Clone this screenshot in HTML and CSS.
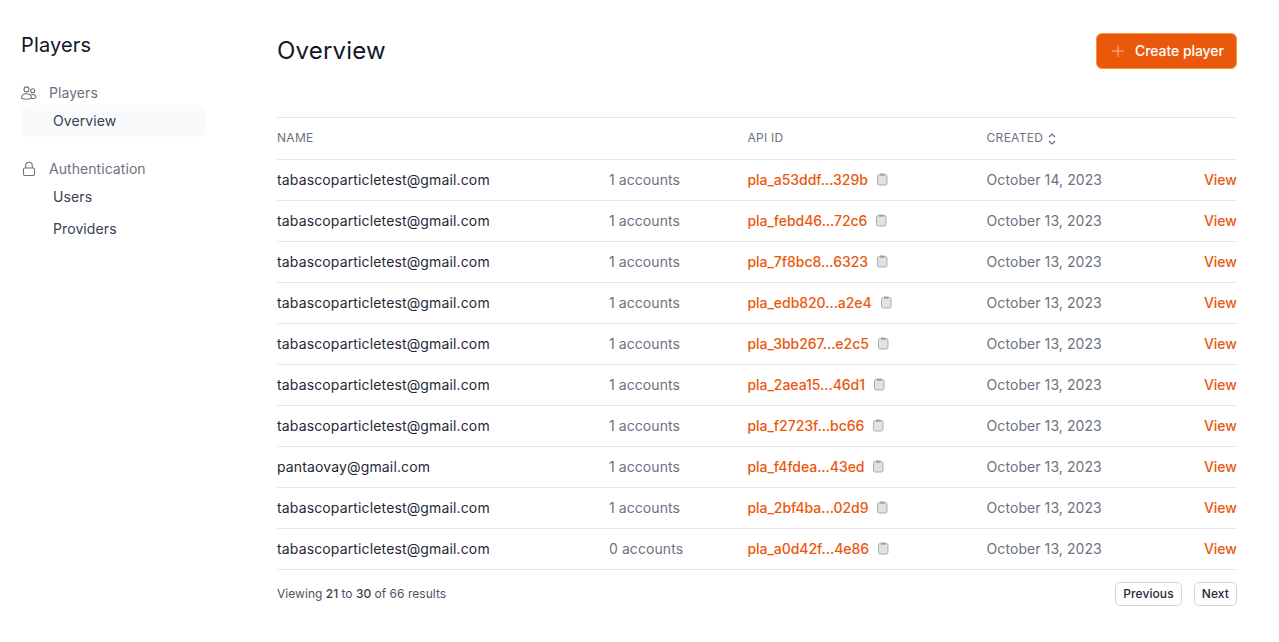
FILE: index.html
```html
<!DOCTYPE html>
<html lang="en"><head><meta charset="utf-8"><title>Players</title><link rel="stylesheet" href="styles.css"></head>
<body>
<svg class="sprite"><symbol id="clip" viewBox="0 0 11 13"><rect x=".5" y="1.5" width="9.500" height="10.500" rx="1.800"/><path d="M3 .5h4.500v2.300H3z" class="clasp"/></symbol></svg>
<div class="app">
<aside class="sidebar">
<h2 class="side-title">Players</h2>
<nav>
<div class="group"><svg class="gicon" viewBox="0 0 16 16"><circle cx="5.500" cy="4.400" r="2.500"/><path d="M.7 13.300c-.6-3 2-4.600 4.800-4.600s5.400 1.600 4.800 4.600c-2.500 1.300-7.100 1.300-9.600 0z"/><circle cx="11.700" cy="5.700" r="2"/><path d="M10.300 9.600c2.700-.6 4.800.7 4.600 3-1.200.8-2.900 1-4.400.8"/></svg>Players</div>
<a class="item active">Overview</a>
<div class="group second"><svg class="gicon" viewBox="0 0 16 16"><rect x="2.500" y="7" width="11" height="7.500" rx="1.500"/><path d="M4.700 7V4.500a3.300 3.300 0 0 1 6.600 0V7"/></svg>Authentication</div>
<a class="item">Users</a><a class="item">Providers</a>
</nav></aside>
<main class="main">
<header class="head"><h1>Overview</h1><button class="create"><svg viewBox="0 0 14 14"><path d="M7 1v12M1 7h12"/></svg>Create player</button></header>
<div class="table" id="table">
<div class="row thead"><span>NAME</span><span></span><span>API ID</span><span class="created">CREATED<svg viewBox="0 0 8 12"><path d="M1 4l3-3 3 3M1 8l3 3 3-3"/></svg></span><span></span></div>
</div>
<footer class="foot"><span>Viewing <b>21</b> to <b>30</b> of 66 results</span><div class="pager"><button>Previous</button><button>Next</button></div></footer>
</main></div>
<script src="app.js"></script>
</body></html>
```

FILE: styles.css
```css
*{box-sizing:border-box}
body{margin:0;background:#fff;color:#1f2937;font:14px/20px Inter,sans-serif;letter-spacing:.14px}
.sprite{display:none}
.app{display:flex;height:642px}
.sidebar{width:205px;padding:31px 0 0 21px;flex:none}
h1,h2{margin:0;font-weight:400;color:#111827}
.side-title{font-size:20px;line-height:28px;margin-bottom:24px}
.group{display:flex;align-items:center;gap:12px;height:20px;color:#6b7280;margin-bottom:2px;letter-spacing:.06px}
.group.second{margin-top:22px}
.gicon{width:16px;height:16px;fill:none;stroke:#6b7280;stroke-width:1.100}
.item{display:block;height:32px;padding:6px 0 0 32px;border-radius:6px;color:#374151;letter-spacing:.1px}
.item.active{background:#f9fafb}
.main{margin-left:72px;width:960px;padding-top:33px}
.head{display:flex;justify-content:space-between;height:84px}
h1{font-size:24px;line-height:35px;letter-spacing:.2px}
.create{height:36px;width:141px;background:#ea580c;border:1px solid #fb923c;border-radius:6px;color:#fff;font:500 14px/20px Inter,sans-serif;letter-spacing:-.06px;display:flex;align-items:center;padding:0 0 0 14px;gap:10px;white-space:nowrap}
.create svg{width:14px;height:14px;stroke:#fdba8c;fill:none;flex:none}
.row{display:grid;grid-template-columns:332px 138.4px 239.200px 150.400px 100px;height:41px;align-items:center;border-bottom:1px solid #e5e7eb}
.thead{height:43px;border-top:1px solid #e5e7eb;padding-bottom:1px;font-size:12px;letter-spacing:.28px;color:#6b7280}
.created{display:flex;align-items:center;gap:5px}
.created svg{width:8px;height:12px;margin-top:2px;fill:none;stroke:#6b7280;stroke-width:1.200}
.muted{color:#6b7280;letter-spacing:.07px}
.api{display:flex;align-items:center;gap:9px;color:#ea580c;font-weight:500;letter-spacing:-.04px}
.api svg{width:11px;height:13px;margin-bottom:1px;fill:#e1e2e5;stroke:#adadb0}
.api .clasp,.clasp{fill:#a3a3a3;stroke:none}
.view{color:#ea580c;font-weight:500;text-align:right;letter-spacing:0}
.foot{display:flex;justify-content:space-between;align-items:center;height:48px;font-size:12px;letter-spacing:.04px;color:#4b5563}
.foot b{font-weight:500;color:#374151;letter-spacing:-.1px}
.pager{display:flex;gap:12px}
.pager button{height:24px;background:#fff;border:1px solid #d1d5db;border-radius:5px;padding:0 7px;font:500 12px/16px Inter,sans-serif;letter-spacing:.1px;color:#1f2937}
```

FILE: app.js
```js
const players = [
  ["tabascoparticletest@gmail.com", 1, "pla_a53ddf...329b", 14],
  ["tabascoparticletest@gmail.com", 1, "pla_febd46...72c6", 13],
  ["tabascoparticletest@gmail.com", 1, "pla_7f8bc8...6323", 13],
  ["tabascoparticletest@gmail.com", 1, "pla_edb820...a2e4", 13],
  ["tabascoparticletest@gmail.com", 1, "pla_3bb267...e2c5", 13],
  ["tabascoparticletest@gmail.com", 1, "pla_2aea15...46d1", 13],
  ["tabascoparticletest@gmail.com", 1, "pla_f2723f...bc66", 13],
  ["pantaovay@gmail.com", 1, "pla_f4fdea...43ed", 13],
  ["tabascoparticletest@gmail.com", 1, "pla_2bf4ba...02d9", 13],
  ["tabascoparticletest@gmail.com", 0, "pla_a0d42f...4e86", 13]
];
document.getElementById("table").insertAdjacentHTML("beforeend", players.map(([name, n, id, day]) =>
  `<div class="row"><span>${name}</span><span class="muted">${n} accounts</span><span class="api">${id}<svg><use href="#clip"/></svg></span><span class="muted">October ${day}, 2023</span><a class="view">View</a></div>`).join(""));
```
